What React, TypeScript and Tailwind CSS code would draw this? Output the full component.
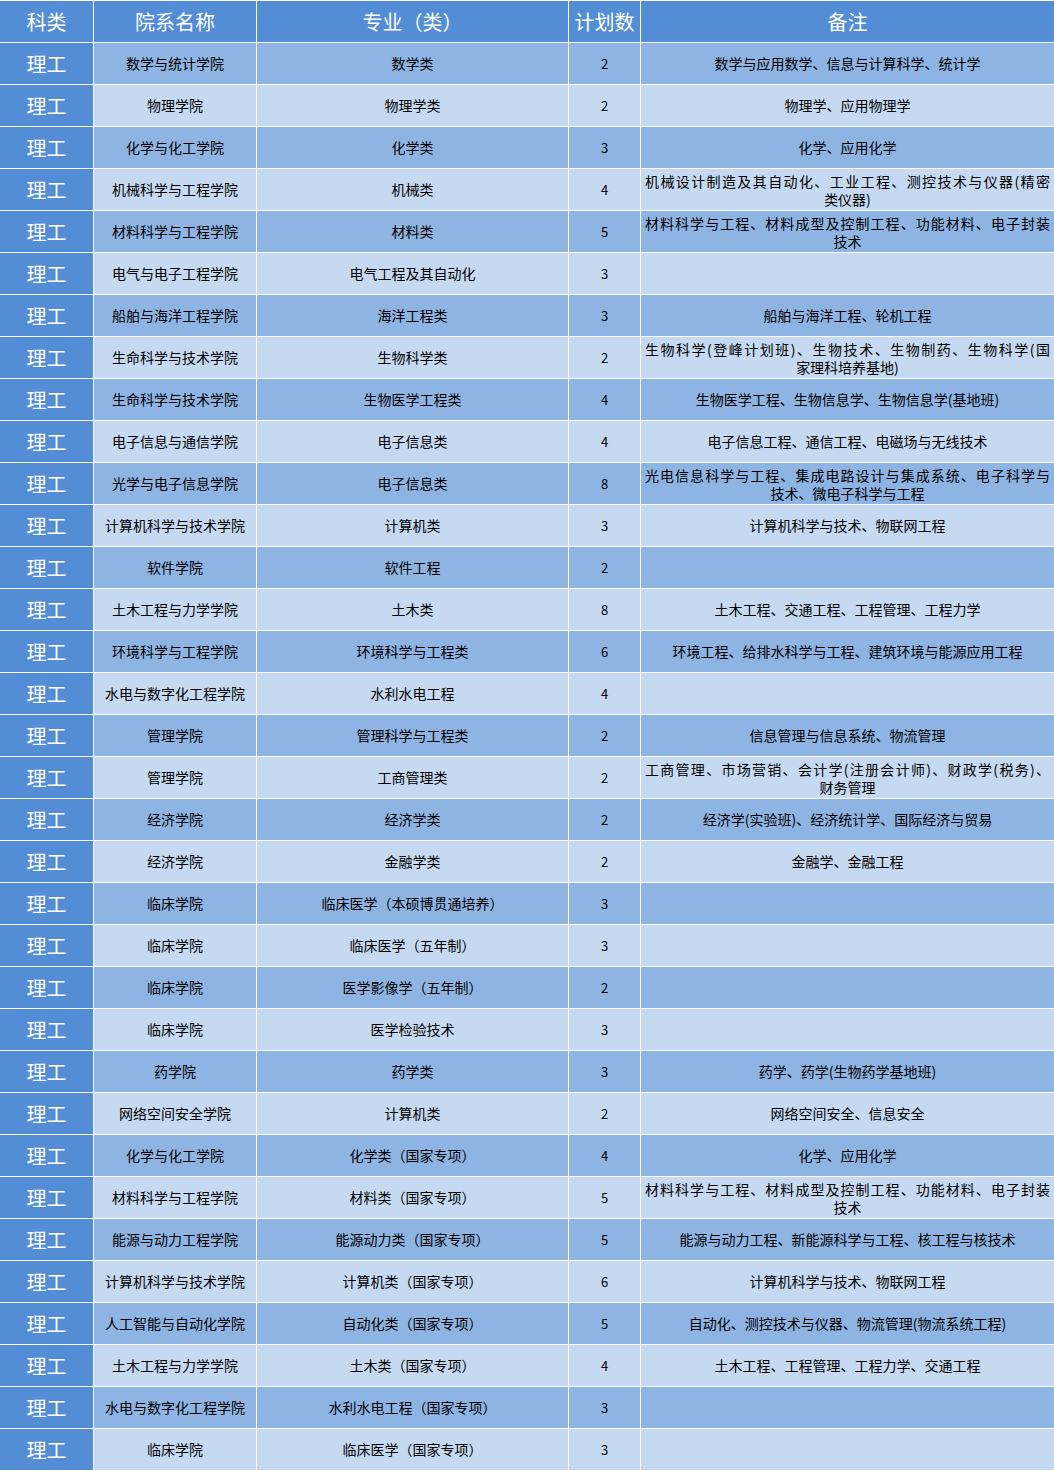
type Row = {
  college: string
  major: string
  count: number
  note?: string | [string, string]
}

const rows: Row[] = [
  { college: '数学与统计学院', major: '数学类', count: 2, note: '数学与应用数学、信息与计算科学、统计学' },
  { college: '物理学院', major: '物理学类', count: 2, note: '物理学、应用物理学' },
  { college: '化学与化工学院', major: '化学类', count: 3, note: '化学、应用化学' },
  { college: '机械科学与工程学院', major: '机械类', count: 4, note: ['机械设计制造及其自动化、工业工程、测控技术与仪器(精密', '类仪器)'] },
  { college: '材料科学与工程学院', major: '材料类', count: 5, note: ['材料科学与工程、材料成型及控制工程、功能材料、电子封装', '技术'] },
  { college: '电气与电子工程学院', major: '电气工程及其自动化', count: 3 },
  { college: '船舶与海洋工程学院', major: '海洋工程类', count: 3, note: '船舶与海洋工程、轮机工程' },
  { college: '生命科学与技术学院', major: '生物科学类', count: 2, note: ['生物科学(登峰计划班)、生物技术、生物制药、生物科学(国', '家理科培养基地)'] },
  { college: '生命科学与技术学院', major: '生物医学工程类', count: 4, note: '生物医学工程、生物信息学、生物信息学(基地班)' },
  { college: '电子信息与通信学院', major: '电子信息类', count: 4, note: '电子信息工程、通信工程、电磁场与无线技术' },
  { college: '光学与电子信息学院', major: '电子信息类', count: 8, note: ['光电信息科学与工程、集成电路设计与集成系统、电子科学与', '技术、微电子科学与工程'] },
  { college: '计算机科学与技术学院', major: '计算机类', count: 3, note: '计算机科学与技术、物联网工程' },
  { college: '软件学院', major: '软件工程', count: 2 },
  { college: '土木工程与力学学院', major: '土木类', count: 8, note: '土木工程、交通工程、工程管理、工程力学' },
  { college: '环境科学与工程学院', major: '环境科学与工程类', count: 6, note: '环境工程、给排水科学与工程、建筑环境与能源应用工程' },
  { college: '水电与数字化工程学院', major: '水利水电工程', count: 4 },
  { college: '管理学院', major: '管理科学与工程类', count: 2, note: '信息管理与信息系统、物流管理' },
  { college: '管理学院', major: '工商管理类', count: 2, note: ['工商管理、市场营销、会计学(注册会计师)、财政学(税务)、', '财务管理'] },
  { college: '经济学院', major: '经济学类', count: 2, note: '经济学(实验班)、经济统计学、国际经济与贸易' },
  { college: '经济学院', major: '金融学类', count: 2, note: '金融学、金融工程' },
  { college: '临床学院', major: '临床医学（本硕博贯通培养）', count: 3 },
  { college: '临床学院', major: '临床医学（五年制）', count: 3 },
  { college: '临床学院', major: '医学影像学（五年制）', count: 2 },
  { college: '临床学院', major: '医学检验技术', count: 3 },
  { college: '药学院', major: '药学类', count: 3, note: '药学、药学(生物药学基地班)' },
  { college: '网络空间安全学院', major: '计算机类', count: 2, note: '网络空间安全、信息安全' },
  { college: '化学与化工学院', major: '化学类（国家专项）', count: 4, note: '化学、应用化学' },
  { college: '材料科学与工程学院', major: '材料类（国家专项）', count: 5, note: ['材料科学与工程、材料成型及控制工程、功能材料、电子封装', '技术'] },
  { college: '能源与动力工程学院', major: '能源动力类（国家专项）', count: 5, note: '能源与动力工程、新能源科学与工程、核工程与核技术' },
  { college: '计算机科学与技术学院', major: '计算机类（国家专项）', count: 6, note: '计算机科学与技术、物联网工程' },
  { college: '人工智能与自动化学院', major: '自动化类（国家专项）', count: 5, note: '自动化、测控技术与仪器、物流管理(物流系统工程)' },
  { college: '土木工程与力学学院', major: '土木类（国家专项）', count: 4, note: '土木工程、工程管理、工程力学、交通工程' },
  { college: '水电与数字化工程学院', major: '水利水电工程（国家专项）', count: 3 },
  { college: '临床学院', major: '临床医学（国家专项）', count: 3 },
]

const headers = ['科类', '院系名称', '专业（类）', '计划数', '备注']

function Note({ note }: { note?: Row['note'] }) {
  if (!note) return null
  if (typeof note === 'string') return <span>{note}</span>
  return (
    <div className="w-full leading-[18px]">
      <div className="[text-align-last:justify] text-justify">{note[0]}</div>
      <div className="text-center">{note[1]}</div>
    </div>
  )
}

export default function App() {
  return (
    <div
      className="w-[1054px] h-[1471px] bg-white pt-px grid grid-cols-[93px_162px_311px_71px_413px] auto-rows-[41px] gap-px text-black"
      style={{ fontFamily: '"Noto Sans CJK SC", "Noto Sans", sans-serif' }}
    >
      {headers.map((h) => (
        <div key={h} className="bg-[#538dd5] text-white text-[20px] flex items-center justify-center">
          {h}
        </div>
      ))}
      {rows.map((r, i) => {
        const bg = i % 2 === 0 ? 'bg-[#8db4e2]' : 'bg-[#c5d9f1]'
        return (
          <div key={i} className="contents">
            <div className="bg-[#538dd5] text-white text-[20px] flex items-center justify-center">理工</div>
            <div className={`${bg} text-[14px] flex items-center justify-center`}>{r.college}</div>
            <div className={`${bg} text-[14px] flex items-center justify-center`}>{r.major}</div>
            <div className={`${bg} text-[13px] flex items-center justify-center`}>{r.count}</div>
            <div className={`${bg} text-[14px] flex items-center justify-center px-[4px]`}>
              <Note note={r.note} />
            </div>
          </div>
        )
      })}
    </div>
  )
}
